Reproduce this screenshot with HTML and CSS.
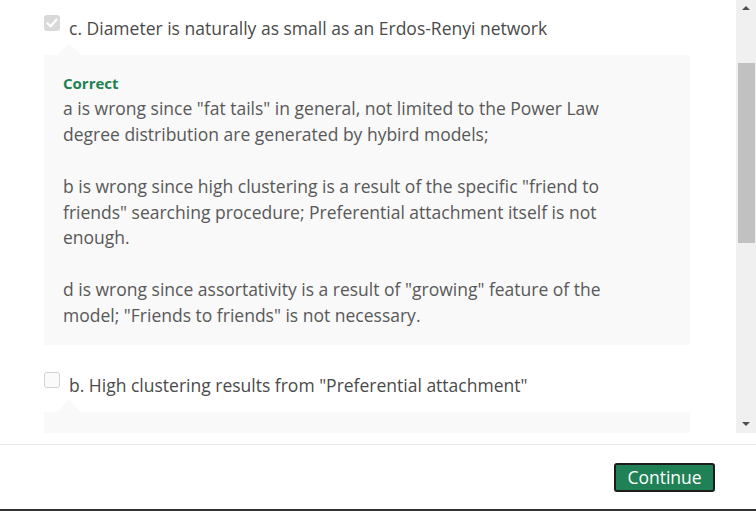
FILE: index.html
```html
<!DOCTYPE html>
<html>
<head>
<meta charset="utf-8">
<link rel="stylesheet" href="styles.css">
</head>
<body>
<div class="app">
  <div class="pane">
    <div class="content">
      <div class="option">
        <span class="check checked">
          <svg viewBox="0 0 16 16" width="16" height="16"><path d="M3.5 8.3 L6.6 11.2 L12.6 4.6" fill="none" stroke="#fff" stroke-width="2.2" stroke-linecap="round" stroke-linejoin="round"/></svg>
        </span>
        <span class="label">c. Diameter is naturally as small as an Erdos-Renyi network</span>
      </div>
      <div class="feedback">
        <div class="verdict">Correct</div>
        <p>a is wrong since "fat tails" in general, not limited to the Power Law degree distribution are generated by hybird models;</p>
        <p>b is wrong since high clustering is a result of the specific "friend to friends" searching procedure; Preferential attachment itself is not enough.</p>
        <p>d is wrong since assortativity is a result of "growing" feature of the model; "Friends to friends" is not necessary.</p>
      </div>
      <div class="option second">
        <span class="check"></span>
        <span class="label">b. High clustering results from "Preferential attachment"</span>
      </div>
      <div class="feedback empty"></div>
    </div>
    <div class="scrollbar">
      <div class="arrow up"></div>
      <div class="thumb"></div>
      <div class="spacer"></div>
      <div class="arrow down"></div>
    </div>
  </div>
  <div class="gap"></div>
  <div class="footer">
    <button class="continue">Continue</button>
  </div>
</div>
</body>
</html>
```
FILE: styles.css
```css
html, body {
  margin: 0;
  padding: 0;
  background: #fff;
}
body {
  font-family: "Open Sans", "Liberation Sans", sans-serif;
  width: 756px;
  height: 511px;
  overflow: hidden;
}
.app {
  display: flex;
  flex-direction: column;
  height: 511px;
}
.pane {
  display: flex;
  height: 433px;
  flex: none;
}
.content {
  flex: 1;
  overflow: hidden;
  padding: 15px 46px 0 44px;
}
.option {
  display: flex;
  align-items: flex-start;
  gap: 9px;
  line-height: 26px;
}
.option.second {
  margin-top: 27px;
}
.check {
  flex: none;
  width: 16px;
  height: 16px;
  box-sizing: border-box;
  border-radius: 3px;
  border: 1px solid #d2d2d2;
  background: #fafafa;
  display: flex;
}
.check.checked {
  border: none;
  background: #d9d9d9;
}
.label {
  font-size: 17.5px;
  color: #4a4a4a;
}
.feedback {
  position: relative;
  margin-top: 14px;
  background: #f9f9f9;
  padding: 17px 20px 16px 19px;
}
.feedback::before {
  content: "";
  position: absolute;
  top: -12px;
  left: 13px;
  border-left: 12px solid transparent;
  border-right: 12px solid transparent;
  border-bottom: 12px solid #f9f9f9;
}
.feedback.empty {
  height: 40px;
  padding: 0;
}
.verdict {
  font-size: 15px;
  font-weight: 700;
  color: #1e8152;
  line-height: 22px;
  margin-bottom: 2px;
}
.feedback p {
  margin: 0;
  max-width: 555px;
  font-size: 17.5px;
  line-height: 25.875px;
  color: #585858;
}
.feedback p + p {
  margin-top: 25.875px;
}
.scrollbar {
  flex: none;
  width: 20px;
  background: #f0f0f0;
  display: flex;
  flex-direction: column;
  align-items: center;
}
.arrow {
  width: 0;
  height: 0;
  border-left: 4px solid transparent;
  border-right: 4px solid transparent;
}
.arrow.up {
  margin-top: 6px;
  border-bottom: 4px solid #505050;
}
.arrow.down {
  margin-bottom: 7px;
  border-top: 4px solid #505050;
}
.thumb {
  margin-top: 53px;
  width: 17px;
  margin-left: 1px;
  height: 180px;
  background: #c1c1c1;
}
.spacer {
  flex: 1;
}
.gap {
  height: 11px;
  flex: none;
}
.footer {
  flex: 1;
  border-top: 1px solid #e6e6e6;
  border-bottom: 2px solid #333;
  display: flex;
  justify-content: flex-end;
  align-items: flex-start;
  padding: 18px 41px 0 0;
}
.continue {
  font-family: "Open Sans", "Liberation Sans", sans-serif;
  font-size: 17.5px;
  color: #fff;
  background: #1f8155;
  border: 2px solid #1c1c1c;
  border-radius: 3px;
  width: 101px;
  height: 29px;
  padding: 0;
  line-height: 25px;
}
```
